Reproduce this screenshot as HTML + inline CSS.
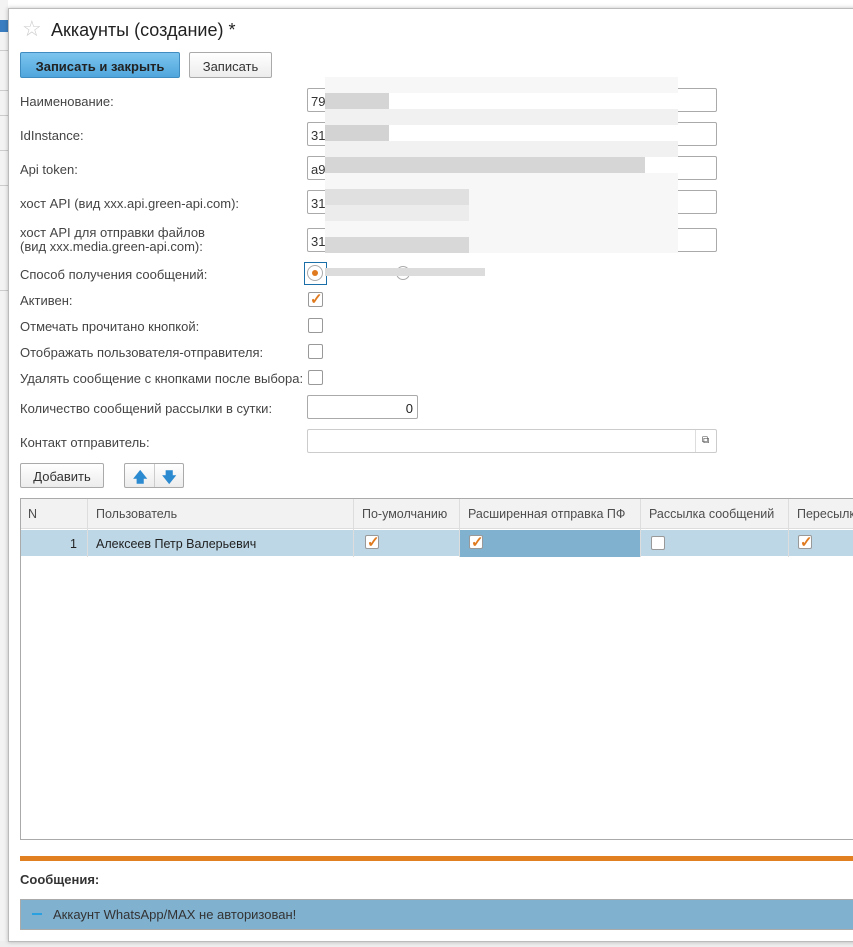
<!DOCTYPE html>
<html><head><meta charset="utf-8"><style>
*{box-sizing:border-box;margin:0;padding:0}
body{width:853px;height:947px;overflow:hidden;background:#fff;font-family:"Liberation Sans",Arial,sans-serif;font-size:12.5px;color:#4d4d4d;position:relative}
.a{position:absolute}
.win{left:8px;top:8px;width:860px;height:934px;background:#fff;border:1px solid #bbb;box-shadow:0 0 4px rgba(0,0,0,.25)}
.lbl{left:20px;color:#444;font-size:13px}
.inp{left:307px;width:410px;height:24px;border:1px solid #aaa;border-radius:2px;background:#fff;padding:5px 0 0 3px;color:#333;font-size:13px}
.cb{width:15px;height:15px;border:1px solid #999;border-radius:2px;background:#fff}
.ck{color:#e07a1f;font-size:15px;font-weight:bold;line-height:13px;padding-left:1px}
.btn{border:1px solid #aaa;border-radius:2px;background:linear-gradient(#fff,#ececec);text-align:center;color:#333;font-size:13px}
</style></head><body>
<div class="a" style="left:0;top:0;width:8px;height:947px;background:#f3f3f3"></div>
<div class="a" style="left:0;top:50px;width:8px;height:1px;background:#ccc"></div>
<div class="a" style="left:0;top:90px;width:8px;height:1px;background:#ccc"></div>
<div class="a" style="left:0;top:115px;width:8px;height:1px;background:#ccc"></div>
<div class="a" style="left:0;top:150px;width:8px;height:1px;background:#ccc"></div>
<div class="a" style="left:0;top:185px;width:8px;height:1px;background:#ccc"></div>
<div class="a" style="left:0;top:290px;width:8px;height:1px;background:#ccc"></div>
<div class="a" style="left:0;top:20px;width:8px;height:12px;background:#3a7dc0"></div>
<div class="a" style="left:0;top:941px;width:853px;height:6px;background:#eee"></div>
<div class="a win"></div>
<div class="a" style="left:22px;top:16px;font-size:22px;color:#ccc">☆</div>
<div class="a" style="left:51px;top:20px;font-size:18px;color:#222">Аккаунты (создание) *</div>
<div class="a btn" style="left:20px;top:52px;width:160px;height:26px;background:linear-gradient(#7cc4ee,#4fa6dc);border-color:#3f8dc0;font-weight:bold;color:#222;padding-top:6px">Записать и закрыть</div>
<div class="a btn" style="left:189px;top:52px;width:83px;height:26px;padding-top:6px">Записать</div>

<div class="a lbl" style="top:94px">Наименование:</div>
<div class="a lbl" style="top:128px">IdInstance:</div>
<div class="a lbl" style="top:162px">Api token:</div>
<div class="a lbl" style="top:196px">хост API (вид xxx.api.green-api.com):</div>
<div class="a lbl" style="top:226px;line-height:14px">хост API для отправки файлов<br>(вид xxx.media.green-api.com):</div>
<div class="a lbl" style="top:267px">Способ получения сообщений:</div>
<div class="a lbl" style="top:293px">Активен:</div>
<div class="a lbl" style="top:319px">Отмечать прочитано кнопкой:</div>
<div class="a lbl" style="top:345px">Отображать пользователя-отправителя:</div>
<div class="a lbl" style="top:371px">Удалять сообщение с кнопками после выбора:</div>
<div class="a lbl" style="top:401px">Количество сообщений рассылки в сутки:</div>
<div class="a lbl" style="top:435px">Контакт отправитель:</div>

<div class="a inp" style="top:88px">79</div>
<div class="a inp" style="top:122px">31</div>
<div class="a inp" style="top:156px">a9</div>
<div class="a inp" style="top:190px">31</div>
<div class="a inp" style="top:228px">31</div>
<div class="a" style="left:325px;top:77px;width:353px;height:176px;background:#f7f7f7"></div>
<div class="a" style="left:325px;top:93px;width:64px;height:16px;background:#d5d5d5"></div>
<div class="a" style="left:389px;top:93px;width:289px;height:16px;background:#fff"></div>
<div class="a" style="left:325px;top:109px;width:353px;height:16px;background:#f1f1f1"></div>
<div class="a" style="left:325px;top:125px;width:64px;height:16px;background:#d3d3d3"></div>
<div class="a" style="left:389px;top:125px;width:289px;height:16px;background:#fff"></div>
<div class="a" style="left:325px;top:141px;width:353px;height:16px;background:#f1f1f1"></div>
<div class="a" style="left:325px;top:157px;width:320px;height:16px;background:#d6d6d6"></div>
<div class="a" style="left:645px;top:157px;width:33px;height:16px;background:#fff"></div>
<div class="a" style="left:325px;top:189px;width:144px;height:16px;background:#e0e0e0"></div>
<div class="a" style="left:325px;top:205px;width:144px;height:16px;background:#ececec"></div>
<div class="a" style="left:325px;top:237px;width:144px;height:16px;background:#d8d8d8"></div>

<div class="a" style="left:304px;top:262px;width:23px;height:23px;border:1px solid #1b6fa8"></div>
<div class="a" style="left:307px;top:265px;width:16px;height:16px;border:1px solid #aaa;border-radius:50%"></div>
<div class="a" style="left:312px;top:270px;width:6px;height:6px;background:#e07a1f;border-radius:50%"></div>
<div class="a" style="left:396px;top:266px;width:14px;height:14px;border:1px solid #aaa;border-radius:50%"></div>
<div class="a" style="left:325px;top:268px;width:160px;height:8px;background:#dcdcdc"></div>

<div class="a cb ck" style="left:308px;top:292px">✓</div>
<div class="a cb" style="left:308px;top:318px"></div>
<div class="a cb" style="left:308px;top:344px"></div>
<div class="a cb" style="left:308px;top:370px"></div>
<div class="a inp" style="top:395px;width:111px;text-align:right;padding-right:4px;color:#222">0</div>
<div class="a inp" style="top:429px;border-color:#ccc"></div>
<div class="a" style="left:695px;top:430px;width:1px;height:22px;background:#ddd"></div>
<div class="a" style="left:702px;top:435px;font-size:10px;color:#444">⧉</div>

<div class="a btn" style="left:20px;top:463px;width:84px;height:25px;padding-top:5px">Добавить</div>
<div class="a btn" style="left:124px;top:463px;width:60px;height:25px"></div>
<div class="a" style="left:154px;top:464px;width:1px;height:23px;background:#ccc"></div>
<div class="a" style="left:133px;top:467px;color:#2c8ad0;font-size:14px;font-weight:bold">🡅</div>
<div class="a" style="left:162px;top:467px;color:#2c8ad0;font-size:14px;font-weight:bold">🡇</div>

<div class="a" style="left:20px;top:498px;width:840px;height:342px;border:1px solid #aaa;background:#fff"></div>
<div class="a" style="left:21px;top:499px;width:840px;height:30px;background:#f2f2f2;border-bottom:1px solid #ddd"></div>
<div class="a" style="left:21px;top:530px;width:840px;height:27px;background:#bdd7e6;border-bottom:1px solid #fff"></div>
<div class="a" style="left:460px;top:530px;width:180px;height:27px;background:#80b1cf"></div>
<div class="a" style="left:87px;top:499px;width:1px;height:58px;background:#ddd"></div>
<div class="a" style="left:353px;top:499px;width:1px;height:58px;background:#ddd"></div>
<div class="a" style="left:459px;top:499px;width:1px;height:58px;background:#ddd"></div>
<div class="a" style="left:640px;top:499px;width:1px;height:58px;background:#ddd"></div>
<div class="a" style="left:788px;top:499px;width:1px;height:58px;background:#ddd"></div>
<div class="a" style="left:28px;top:507px">N</div>
<div class="a" style="left:96px;top:507px">Пользователь</div>
<div class="a" style="left:362px;top:507px">По-умолчанию</div>
<div class="a" style="left:468px;top:507px">Расширенная отправка ПФ</div>
<div class="a" style="left:649px;top:507px">Рассылка сообщений</div>
<div class="a" style="left:797px;top:507px;white-space:nowrap">Пересылка</div>
<div class="a" style="left:70px;top:537px;color:#222">1</div>
<div class="a" style="left:96px;top:537px;color:#222">Алексеев Петр Валерьевич</div>
<div class="a cb ck" style="left:365px;top:535px;width:14px;height:14px">✓</div>
<div class="a cb ck" style="left:469px;top:535px;width:14px;height:14px">✓</div>
<div class="a cb" style="left:651px;top:536px;width:14px;height:14px"></div>
<div class="a cb ck" style="left:798px;top:535px;width:14px;height:14px">✓</div>

<div class="a" style="left:20px;top:856px;width:840px;height:5px;background:#e08020"></div>
<div class="a" style="left:20px;top:872px;font-weight:bold;color:#333;font-size:13px">Сообщения:</div>
<div class="a" style="left:20px;top:899px;width:840px;height:31px;border:1px solid #aaa;background:#80b1cf"></div>
<div class="a" style="left:32px;top:913px;width:10px;height:2px;background:#2aa0e0"></div>
<div class="a" style="left:53px;top:907px;color:#333;font-size:13px">Аккаунт WhatsApp/MAX не авторизован!</div>
</body></html>
